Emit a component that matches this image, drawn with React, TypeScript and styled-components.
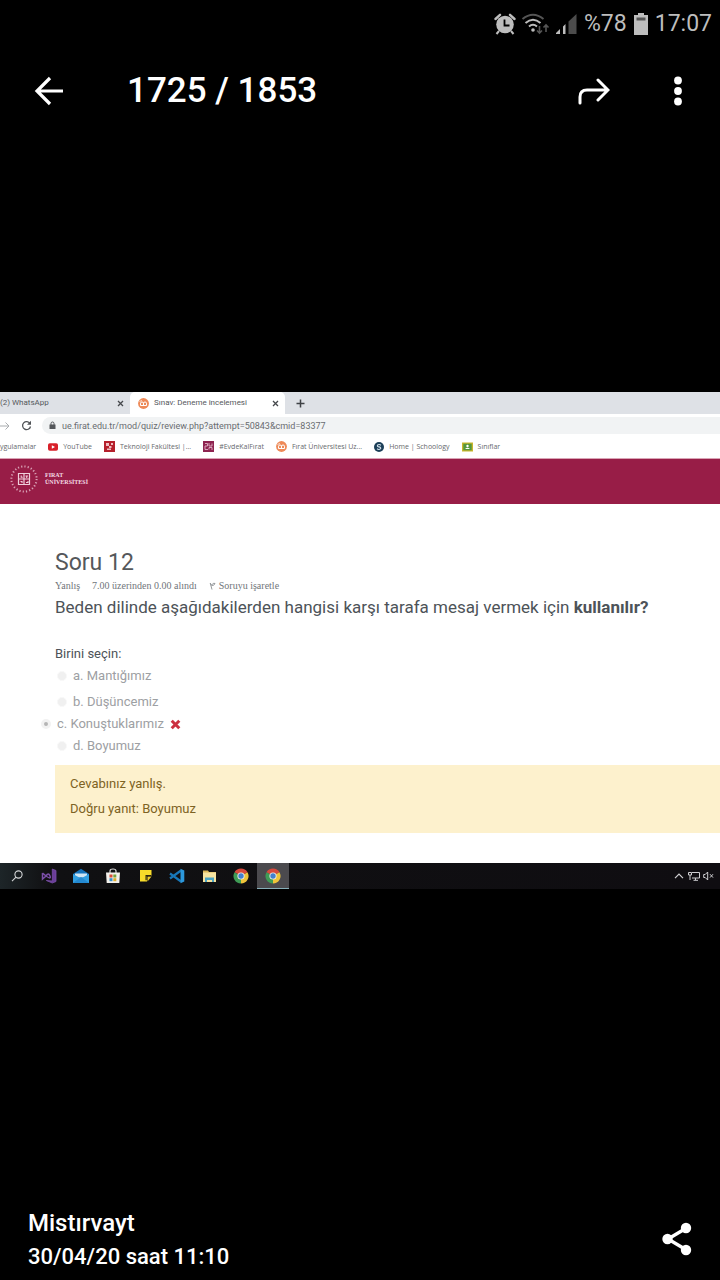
import React from "react";
import styled, { createGlobalStyle } from "styled-components";

const GlobalStyle = createGlobalStyle`
  *, *::before, *::after { box-sizing: border-box; }
  body {
    margin: 0;
    background: #000;
    font-family: Roboto, "Liberation Sans", sans-serif;
  }
  button {
    margin: 0;
    padding: 0;
    border: 0;
    background: none;
    color: inherit;
    font: inherit;
    cursor: pointer;
  }
  a { color: inherit; text-decoration: none; }
  h1, h2, p { margin: 0; font-weight: 400; }
  svg { display: block; flex: none; }
`;

const Screen = styled.div`
  display: flex;
  flex-direction: column;
  min-height: 100vh;
  background: #000;
  color: #fff;
`;

const Header = styled.header`
  height: 137px;
`;

const StatusBar = styled.div`
  display: flex;
  justify-content: flex-end;
  align-items: center;
  gap: 7px;
  height: 48px;
  padding-right: 8px;
  color: #bdbdbd;
  font-size: 23px;
  line-height: 28px;
`;

const StatusGlyphs = styled.div`
  display: flex;
  align-items: center;
  gap: 5px;
`;

const AppBar = styled.div`
  display: flex;
  align-items: center;
  height: 86px;
  padding: 0 26px 0 32px;
`;

const IconButton = styled.button`
  display: flex;
  align-items: center;
  justify-content: center;
  width: 32px;
  height: 40px;
`;

const Counter = styled.h1`
  flex: 1;
  margin-left: 63px;
  font-size: 35px;
  font-weight: 500;
  line-height: 40px;
`;

const AppActions = styled.div`
  display: flex;
  gap: 52px;
`;

const Viewer = styled.main`
  display: flex;
  flex: 1;
  flex-direction: column;
  justify-content: center;
`;

const Photo = styled.section`
  overflow: hidden;
  background: #fff;
`;

const TabStrip = styled.div`
  display: flex;
  height: 22px;
  background: #dee1e6;
`;

const Tab = styled.div<{ $active?: boolean }>`
  display: flex;
  align-items: center;
  gap: 5px;
  width: ${(p) => (p.$active ? "155px" : "130px")};
  padding: ${(p) => (p.$active ? "0 6px 0 8px" : "0 6px 0 0")};
  border-radius: 5px 5px 0 0;
  background: ${(p) => (p.$active ? "#fff" : "transparent")};
  color: #55585c;
  font-size: 8px;
  line-height: 12px;
`;

const TabLabel = styled.button`
  flex: 1;
  text-align: left;
  white-space: nowrap;
`;

const NewTab = styled.button`
  display: flex;
  align-items: center;
  justify-content: center;
  width: 30px;
`;

const AddressRow = styled.form`
  display: flex;
  align-items: center;
  gap: 10px;
  height: 23px;
`;

const NavButton = styled.button`
  display: flex;
  align-items: center;
  width: 11px;
`;

const UrlBox = styled.label`
  display: flex;
  flex: 1;
  align-items: center;
  gap: 6px;
  height: 17px;
  padding-left: 7px;
  border-radius: 9px 0 0 9px;
  background: #f1f3f4;
`;

const UrlInput = styled.input`
  flex: 1;
  min-width: 0;
  padding: 0;
  border: 0;
  outline: 0;
  background: transparent;
  color: #696c70;
  font-family: Roboto, "Liberation Sans", sans-serif;
  font-size: 9px;
  line-height: 12px;
`;

const Bookmarks = styled.nav`
  display: flex;
  align-items: center;
  gap: 12px;
  height: 22px;
  padding-bottom: 2px;
  border-bottom: 1px solid #d9a3b5;
  color: #66696d;
  font-family: "Open Sans", "Noto Sans", sans-serif;
  font-size: 7px;
  line-height: 12px;
  white-space: nowrap;
`;

const Bookmark = styled.a`
  display: flex;
  align-items: center;
  gap: 5px;
`;

const SiteHeader = styled.div`
  display: flex;
  align-items: center;
  gap: 6px;
  height: 45px;
  padding: 0 9px 6px;
  background: #981d47;
`;

const SiteName = styled.a`
  color: #f3dbe3;
  font-family: "Liberation Serif", serif;
  font-size: 6px;
  font-weight: 700;
  line-height: 7px;
`;

const QuizPage = styled.article`
  padding: 45px 0 30px 55px;
  color: #4d5358;
`;

const QuestionTitle = styled.h2`
  color: #55585b;
  font-size: 23px;
  line-height: 28px;
`;

const Meta = styled.div`
  display: flex;
  gap: 12px;
  margin-top: 3px;
  color: #70757a;
  font-family: "Liberation Serif", serif;
  font-size: 10px;
  line-height: 12px;
`;

const FlagButton = styled.button`
  display: flex;
  align-items: center;
  gap: 3px;
`;

const QuestionText = styled.p`
  margin-top: 4px;
  font-size: 17px;
  line-height: 22px;
`;

const Answers = styled.fieldset`
  margin: 0;
  padding: 25px 0 0;
  border: 0;
  font-size: 13px;
  line-height: 22px;
`;

const Prompt = styled.legend`
  float: left;
  width: 100%;
  padding: 0;
`;

const Option = styled.label<{ $outdent?: boolean }>`
  display: flex;
  clear: both;
  align-items: center;
  gap: 6px;
  margin-left: ${(p) => (p.$outdent ? "-14px" : "2px")};
  color: #9da0a3;

  &:first-of-type { margin-bottom: 4px; }
`;

const Radio = styled.input`
  appearance: none;
  width: 10px;
  height: 10px;
  margin: 0;
  border: 1px solid #f8f8f8;
  border-radius: 50%;
  background: #f0f0f0;

  &:checked {
    border: 3px solid #f2f2f2;
    background: #b5b5b5;
  }
`;

const Feedback = styled.div`
  margin-top: 8px;
  padding: 6px 15px 12px;
  background: #fdf1cd;
  color: #7d6324;
  font-size: 13px;
  line-height: 25px;
`;

const TaskBar = styled.div`
  display: flex;
  justify-content: space-between;
  height: 26px;
  padding: 0 4px 0 1px;
  background: linear-gradient(90deg, #1d2528, #101012 50px, #0f0d11);
`;

const TaskGroup = styled.div`
  display: flex;
`;

const TaskButton = styled.button<{ $active?: boolean }>`
  display: flex;
  align-items: center;
  justify-content: center;
  width: 32px;
  background: ${(p) => (p.$active ? "#4b4a4e" : "none")};
  box-shadow: ${(p) => (p.$active ? "inset 0 -1px #86aeb8" : "none")};
`;

const TrayButton = styled.button`
  display: flex;
  align-items: center;
  justify-content: center;
  width: 15px;
`;

const Footer = styled.footer`
  display: flex;
  align-items: flex-end;
  justify-content: space-between;
  height: 136px;
  padding: 0 27px 6px 28px;
`;

const Sender = styled.div`
  font-size: 24px;
  font-weight: 500;
  line-height: 34px;
`;

const SentAt = styled.div`
  font-size: 22px;
  font-weight: 500;
  line-height: 34px;
`;

const ShareButton = styled.button`
  padding-bottom: 18px;
`;

const AlarmIcon = () => (
  <svg width="22" height="22" viewBox="0 0 22 22" fill="none" stroke="#bdbdbd" strokeWidth="2">
    <circle cx="11" cy="11.500" r="8.800" fill="#bdbdbd" stroke="none" />
    <path d="M1.500 6 6 1.800M20.500 6 16 1.800" strokeWidth="2.400" strokeLinecap="round" />
    <path d="m5 18-2.500 3M17 18l2.500 3" />
    <path d="M10.500 6.500v6h5" stroke="#000" strokeWidth="1.800" />
  </svg>
);

const WifiIcon = () => (
  <svg width="29" height="22" viewBox="0 0 29 22" fill="none" strokeWidth="2">
    <path d="M1.500 6Q12 -2.500 22.500 6" stroke="#555" />
    <path d="M4.500 10Q12 3.500 19.500 10M8 13.500q4-3.500 8 0" stroke="#bdbdbd" />
    <circle cx="12" cy="17" r="1.800" fill="#bdbdbd" />
    <path d="M18.500 13v7m-2.500-2.500 2.500 2.500 2.500-2.500M25 19v-7m-2.500 2.500L25 12l2.500 2.500" stroke="#555" strokeWidth="1.600" />
  </svg>
);

const SignalIcon = () => (
  <svg width="22" height="22" viewBox="0 0 22 22">
    <path d="M1 21v-1l4-4v5zM8 21v-7.500l2.500-2.500v10z" fill="#bdbdbd" />
    <path d="M13.500 21V8.500L21.500 1v20z" fill="#4c4c4c" />
  </svg>
);

const BatteryIcon = () => (
  <svg width="14" height="22" viewBox="0 0 14 22">
    <path d="M4 0h6v2h4v20H0V2h4z" fill="#bdbdbd" />
    <path d="M2.500 4.500h9v3h-9z" fill="#555" />
  </svg>
);

const BackIcon = () => (
  <svg width="32" height="32" viewBox="0 0 32 32" fill="none" stroke="#fff" strokeWidth="3.200">
    <path d="M31 16H5M18 3 5 16l13 13" />
  </svg>
);

const ForwardIcon = () => (
  <svg width="32" height="32" viewBox="0 0 32 32" fill="none" stroke="#fff" strokeWidth="3" strokeLinecap="round">
    <path d="M2 28v-6q0-7 7-7h20M20 5l10 10-10 10" />
  </svg>
);

const MoreIcon = () => (
  <svg width="8" height="30" viewBox="0 0 8 30" fill="#fff">
    <circle cx="4" cy="4.500" r="3.900" />
    <circle cx="4" cy="15" r="3.900" />
    <circle cx="4" cy="25.500" r="3.900" />
  </svg>
);

const ShareIcon = () => (
  <svg width="31" height="34" viewBox="0 0 31 34" fill="#fff">
    <path d="M24.500 6 6 17l18.500 11" fill="none" stroke="#fff" strokeWidth="3.400" />
    <circle cx="24" cy="6" r="5.200" />
    <circle cx="5.500" cy="17" r="5.200" />
    <circle cx="24" cy="28" r="5.200" />
  </svg>
);

const CloseIcon = () => (
  <svg width="7" height="7" viewBox="0 0 7 7" stroke="#45484c" strokeWidth="1.300">
    <path d="m1 1 5 5M6 1 1 6" />
  </svg>
);

const PlusIcon = () => (
  <svg width="9" height="9" viewBox="0 0 9 9" stroke="#3e4145" strokeWidth="1.500">
    <path d="M4.500 .5v8M.5 4.500h8" />
  </svg>
);

const MoodleIcon = () => (
  <svg width="11" height="11" viewBox="0 0 11 11" fill="none">
    <circle cx="5.500" cy="5.500" r="5.400" fill="#ee8a58" />
    <path d="M2.500 7.500V5.200q0-1.200 1.500-1.200t1.500 1.200v2.300V5.200Q5.500 4 7 4t1.500 1.200v2.300z" stroke="#fff" strokeWidth="1" />
    <path d="M1.500 3.500 4 2.500" stroke="#fff" strokeWidth=".7" />
  </svg>
);

const ForwardNavIcon = () => (
  <svg width="11" height="10" viewBox="0 0 11 10" fill="none" stroke="#a9acaf" strokeWidth="1">
    <path d="M0 5h9M5.500 1.500 9 5 5.500 8.500" />
  </svg>
);

const ReloadIcon = () => (
  <svg width="11" height="11" viewBox="0 0 11 11" fill="none" stroke="#4f5256" strokeWidth="1.300">
    <path d="M9 3.500A4 4 0 1 0 9.500 6.500" />
    <path d="M10 .8v4H6z" fill="#4f5256" stroke="none" />
  </svg>
);

const LockIcon = () => (
  <svg width="7" height="9" viewBox="0 0 7 9" fill="none">
    <path d="M.5 3.500h6v4.500h-6z" fill="#54575b" />
    <path d="M2 4V2.500q0-1.500 1.500-1.500T5 2.500V4" stroke="#54575b" />
  </svg>
);

const YouTubeIcon = () => (
  <svg width="10" height="10" viewBox="0 0 10 10">
    <rect y="1.200" width="10" height="7.600" rx="1.800" fill="#d8202a" />
    <path d="m3.800 3.200 3.200 1.800-3.200 1.800z" fill="#fff" />
  </svg>
);

const FacultyIcon = () => (
  <svg width="11" height="11" viewBox="0 0 11 11">
    <path d="M0 0h11v11H0z" fill="#b5202c" />
    <path d="M2 2h3v3H2zM5 5h2.500v2H5zM7 2h2v2H7zM3 7.500h4v1.500H3z" fill="#eebfc2" />
  </svg>
);

const FiratIcon = () => (
  <svg width="11" height="11" viewBox="0 0 11 11" fill="none">
    <path d="M0 0h11v11H0z" fill="#8e2450" />
    <path d="M2 2.500h2.500v2.500H2v3.500h3M6 2v3h3V2.500M6 8.500V6.500h3v2.500" stroke="#e2b3c6" strokeWidth=".9" />
  </svg>
);

const SchoologyIcon = () => (
  <svg width="10" height="10" viewBox="0 0 10 10" fill="none">
    <circle cx="5" cy="5" r="5" fill="#1c3f58" />
    <path d="M7 3.200Q5 1.800 3.500 3.200q-.6 1.300 1.500 1.700 2.200.4 1.600 1.800Q5 8.200 3 6.800" stroke="#d5e4ee" strokeWidth="1.100" />
  </svg>
);

const ClassroomIcon = () => (
  <svg width="11" height="10" viewBox="0 0 11 10">
    <path d="M0 .5h11v9H0z" fill="#c9b52a" />
    <path d="M1.300 1.700h8.400v6.600H1.300z" fill="#55963c" />
    <circle cx="5.500" cy="4" r="1.200" fill="#fff" />
    <path d="M3 7q2.500-2.500 5 0z" fill="#fff" />
  </svg>
);

const UniversityEmblem = () => (
  <svg width="30" height="30" viewBox="0 0 30 30" fill="none" stroke="#efcfdb">
    <circle cx="15" cy="15" r="12.600" strokeWidth="2" strokeDasharray="1.200 2.100" opacity=".75" />
    <path d="M9.500 9.500h11v11h-11zM15 9.500v11M9.500 15h11" strokeWidth="1.200" />
    <path d="M12.200 11.500v1.800h1.500M16.500 12h2.500M17.700 12v2M11.500 17.500h1.500v1.500M17 18.500h2v-1.500" strokeWidth="1.100" />
  </svg>
);

const FlagIcon = () => (
  <svg width="7" height="8" viewBox="0 0 7 8" fill="none" stroke="#888c90" strokeWidth=".9">
    <path d="M1.200 1 3 7.500M1.200 1.500q1.500 2 2.500.6t2.300-.6q-1 2.500-3.500 2" />
  </svg>
);

const WrongIcon = () => (
  <svg width="11" height="11" viewBox="0 0 11 11" stroke="#cb3040" strokeWidth="3">
    <path d="m1.700 1.700 7.600 7.600M9.300 1.700 1.700 9.300" />
  </svg>
);

const SearchIcon = () => (
  <svg width="14" height="14" viewBox="0 0 14 14" fill="none" stroke="#d4d6d7" strokeWidth="1.100">
    <circle cx="8.500" cy="5.500" r="3.600" />
    <path d="m6 8.200-4 4" />
  </svg>
);

const VisualStudioIcon = () => (
  <svg width="16" height="16" viewBox="0 0 16 16" fill="none" stroke="#7a4fa8">
    <path d="M11.300 1 15 2.500v11L11.300 15l-6-2.500 6 .5z" fill="#6b3d99" strokeWidth=".8" />
    <path d="M1.500 5v6L5 8 1.500 5M5 8q2.500-4 4 0t-4 0" strokeWidth="1.500" />
  </svg>
);

const MailIcon = () => (
  <svg width="16" height="16" viewBox="0 0 16 16">
    <path d="M0 6 8 .8 16 6v9H0z" fill="#1473bd" />
    <path d="M2 5.500h12v4H2z" fill="#cfe6f5" />
    <path d="M0 6 8 10.500 16 6v9H0z" fill="#319fe2" />
    <path d="M0 15 8 9l8 6z" fill="#2489d1" />
  </svg>
);

const StoreIcon = () => (
  <svg width="16" height="16" viewBox="0 0 16 16">
    <path d="M5 5V3q0-2 3-2t3 2v2" fill="none" stroke="#d9d9d9" strokeWidth="1.200" />
    <path d="M1 4.500h14l-.7 10.500H1.700z" fill="#f3f1ec" />
    <path d="M4.500 6.500h3v3h-3z" fill="#d84a35" />
    <path d="M8.300 6.500h3v3h-3z" fill="#75a33c" />
    <path d="M4.500 10.200h3v3h-3z" fill="#348fc9" />
    <path d="M8.300 10.200h3v3h-3z" fill="#e0ac2c" />
  </svg>
);

const NotesIcon = () => (
  <svg width="13" height="14" viewBox="0 0 13 14">
    <path d="M1 1h11.500v6H8v5.500H1z" fill="#f8dc2a" />
    <path d="M8.500 7.500h4l-4 5z" fill="#f0cf2a" />
    <path d="M6.500 6h6v1.200H7.700v4H6.500z" fill="#2c2710" />
  </svg>
);

const CodeIcon = () => (
  <svg width="16" height="16" viewBox="0 0 16 16" fill="none">
    <path d="M1 5.500 12 13.500M1 10.500 12 2.500" stroke="#1877b8" strokeWidth="2.200" />
    <path d="m11.500.8 3.800 1.700v11l-3.800 1.700z" fill="#2c98dc" />
  </svg>
);

const FolderIcon = () => (
  <svg width="15" height="14" viewBox="0 0 15 14">
    <path d="M1 1.500h5l1 1.500h7v10H1z" fill="#dcb85a" />
    <path d="M1 3.500h13v9.500H1z" fill="#f6e3a0" />
    <path d="M3 8.500h9V13h-2v-2H5v2H3z" fill="#4ba4c4" />
  </svg>
);

const ChromeIcon = () => (
  <svg width="16" height="16" viewBox="0 0 16 16">
    <path d="M8 8 1.500 4.250A7.500 7.500 0 0 1 14.500 4.250z" fill="#d94a3d" />
    <path d="M8 8 14.500 4.250A7.500 7.500 0 0 1 8 15.500z" fill="#efc43a" />
    <path d="M8 8v7.500A7.500 7.500 0 0 1 1.500 4.250z" fill="#3f9c56" />
    <circle cx="8" cy="8" r="3.600" fill="#f1efe8" />
    <circle cx="8" cy="8" r="2.700" fill="#4480d0" />
  </svg>
);

const ChevronIcon = () => (
  <svg width="10" height="8" viewBox="0 0 10 8" fill="none" stroke="#d2d2d4" strokeWidth="1.200">
    <path d="m1 6.200 4-4 4 4" />
  </svg>
);

const NetworkIcon = () => (
  <svg width="12" height="10" viewBox="0 0 12 10" fill="none" stroke="#cfcfd2" strokeWidth="1">
    <path d="M4 1.500h7.500v5.500H4M7.500 7v2M5.500 9.300h4.500M.5 1.500h3V4h-3zM2 4v5" />
  </svg>
);

const MutedIcon = () => (
  <svg width="11" height="10" viewBox="0 0 11 10" fill="none" stroke="#cfcfd2" strokeWidth="1">
    <path d="M.7 3.500h1.500L4.700 1v8L2.200 6.500H.7zM7 3.200l3 3.400M10 3.200 7 6.600" />
  </svg>
);

const bookmarks = [
  { label: "YouTube", icon: <YouTubeIcon /> },
  { label: "Teknoloji Fakültesi |...", icon: <FacultyIcon /> },
  { label: "#EvdeKalFırat", icon: <FiratIcon /> },
  { label: "Fırat Üniversitesi Uz...", icon: <MoodleIcon /> },
  { label: "Home | Schoology", icon: <SchoologyIcon /> },
  { label: "Sınıflar", icon: <ClassroomIcon /> },
];

const options = [
  { text: "a. Mantığımız" },
  { text: "b. Düşüncemiz" },
  { text: "c. Konuştuklarımız", chosen: true },
  { text: "d. Boyumuz" },
];

const tasks = [
  { name: "Ara", icon: <SearchIcon /> },
  { name: "Visual Studio", icon: <VisualStudioIcon /> },
  { name: "Posta", icon: <MailIcon /> },
  { name: "Store", icon: <StoreIcon /> },
  { name: "Notlar", icon: <NotesIcon /> },
  { name: "VS Code", icon: <CodeIcon /> },
  { name: "Dosyalar", icon: <FolderIcon /> },
  { name: "Chrome", icon: <ChromeIcon /> },
  { name: "Chrome penceresi", icon: <ChromeIcon />, active: true },
];

export default function App() {
  return (
    <Screen>
      <GlobalStyle />
      <Header>
        <StatusBar>
          <StatusGlyphs>
            <AlarmIcon />
            <WifiIcon />
            <SignalIcon />
          </StatusGlyphs>
          <span>%78</span>
          <BatteryIcon />
          <span>17:07</span>
        </StatusBar>
        <AppBar>
          <IconButton aria-label="Geri"><BackIcon /></IconButton>
          <Counter>1725 / 1853</Counter>
          <AppActions>
            <IconButton aria-label="İlet"><ForwardIcon /></IconButton>
            <IconButton aria-label="Diğer"><MoreIcon /></IconButton>
          </AppActions>
        </AppBar>
      </Header>

      <Viewer>
        <Photo>
          <TabStrip>
            <Tab>
              <TabLabel>(2) WhatsApp</TabLabel>
              <button aria-label="Sekmeyi kapat"><CloseIcon /></button>
            </Tab>
            <Tab $active>
              <MoodleIcon />
              <TabLabel>Sınav: Deneme incelemesi</TabLabel>
              <button aria-label="Sekmeyi kapat"><CloseIcon /></button>
            </Tab>
            <NewTab aria-label="Yeni sekme"><PlusIcon /></NewTab>
          </TabStrip>
          <AddressRow onSubmit={(e) => e.preventDefault()}>
            <NavButton type="button" aria-label="İleri"><ForwardNavIcon /></NavButton>
            <NavButton type="button" aria-label="Yenile"><ReloadIcon /></NavButton>
            <UrlBox>
              <LockIcon />
              <UrlInput
                aria-label="Adres"
                defaultValue="ue.firat.edu.tr/mod/quiz/review.php?attempt=50843&cmid=83377"
              />
            </UrlBox>
          </AddressRow>
          <Bookmarks>
            <Bookmark href="#">ygulamalar</Bookmark>
            {bookmarks.map((b) => (
              <Bookmark key={b.label} href="#">
                {b.icon}
                {b.label}
              </Bookmark>
            ))}
          </Bookmarks>
          <SiteHeader>
            <UniversityEmblem />
            <SiteName href="#">
              FIRAT
              <br />
              ÜNİVERSİTESİ
            </SiteName>
          </SiteHeader>
          <QuizPage>
            <QuestionTitle>Soru 12</QuestionTitle>
            <Meta>
              <span>Yanlış</span>
              <span>7.00 üzerinden 0.00 alındı</span>
              <FlagButton>
                <FlagIcon />
                Soruyu işaretle
              </FlagButton>
            </Meta>
            <QuestionText>
              Beden dilinde aşağıdakilerden hangisi karşı tarafa mesaj vermek için <b>kullanılır?</b>
            </QuestionText>
            <Answers>
              <Prompt>Birini seçin:</Prompt>
              {options.map((o) => (
                <Option key={o.text} $outdent={o.chosen}>
                  <Radio type="radio" name="answer" disabled defaultChecked={o.chosen} />
                  {o.text}
                  {o.chosen && <WrongIcon />}
                </Option>
              ))}
            </Answers>
            <Feedback>
              <p>Cevabınız yanlış.</p>
              <p>Doğru yanıt: Boyumuz</p>
            </Feedback>
          </QuizPage>
          <TaskBar>
            <TaskGroup>
              {tasks.map((t) => (
                <TaskButton key={t.name} aria-label={t.name} $active={t.active}>
                  {t.icon}
                </TaskButton>
              ))}
            </TaskGroup>
            <TaskGroup>
              <TrayButton aria-label="Gizli simgeler"><ChevronIcon /></TrayButton>
              <TrayButton aria-label="Ağ"><NetworkIcon /></TrayButton>
              <TrayButton aria-label="Ses"><MutedIcon /></TrayButton>
            </TaskGroup>
          </TaskBar>
        </Photo>
      </Viewer>

      <Footer>
        <div>
          <Sender>Mistırvayt</Sender>
          <SentAt>30/04/20 saat 11:10</SentAt>
        </div>
        <ShareButton aria-label="Paylaş"><ShareIcon /></ShareButton>
      </Footer>
    </Screen>
  );
}
